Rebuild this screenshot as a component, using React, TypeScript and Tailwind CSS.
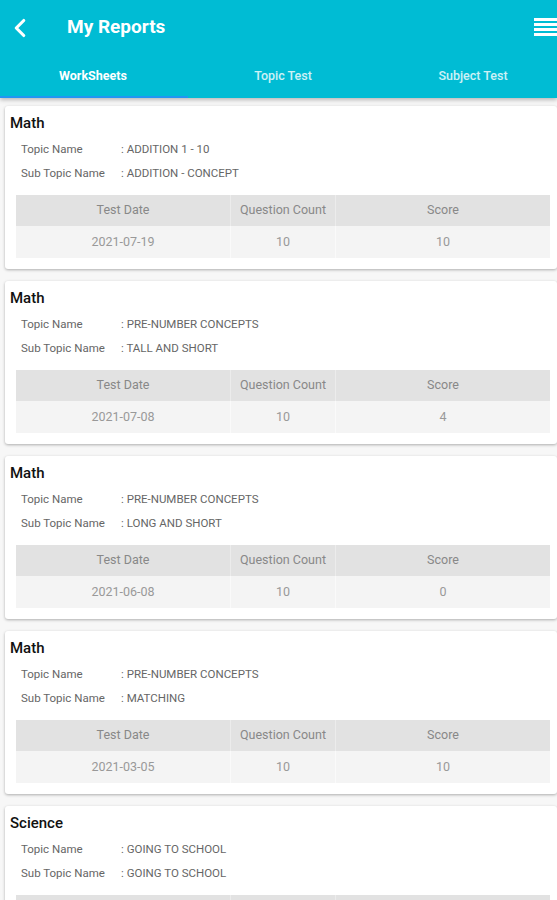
import { ChevronLeft } from 'lucide-react';

type Report = {
  subject: string;
  topic: string;
  subTopic: string;
  date: string;
  count: string;
  score: string;
};

const reports: Report[] = [
  { subject: 'Math', topic: 'ADDITION 1 - 10', subTopic: 'ADDITION - CONCEPT', date: '2021-07-19', count: '10', score: '10' },
  { subject: 'Math', topic: 'PRE-NUMBER CONCEPTS', subTopic: 'TALL AND SHORT', date: '2021-07-08', count: '10', score: '4' },
  { subject: 'Math', topic: 'PRE-NUMBER CONCEPTS', subTopic: 'LONG AND SHORT', date: '2021-06-08', count: '10', score: '0' },
  { subject: 'Math', topic: 'PRE-NUMBER CONCEPTS', subTopic: 'MATCHING', date: '2021-03-05', count: '10', score: '10' },
  { subject: 'Science', topic: 'GOING TO SCHOOL', subTopic: 'GOING TO SCHOOL', date: '2021-02-11', count: '10', score: '8' },
];

const tabs = ['WorkSheets', 'Topic Test', 'Subject Test'];

function ReportCard({ r }: { r: Report }) {
  return (
    <div className="ml-[5px] bg-white rounded-[3px] shadow-[0_1px_3px_rgba(0,0,0,0.3)] pt-[7px] pb-[11px] pl-[5px] pr-[7px]">
      <div className="text-[15px] font-medium text-[#111] leading-[20px]">{r.subject}</div>
      <div className="pl-[11px] mt-[4px] text-[11.5px] text-[#666] leading-[24px]">
        <div className="flex">
          <span className="w-[100px]">Topic Name</span>
          <span>: {r.topic}</span>
        </div>
        <div className="flex">
          <span className="w-[100px]">Sub Topic Name</span>
          <span>: {r.subTopic}</span>
        </div>
      </div>
      <div className="ml-[6px] mt-[10px] text-[12.5px] text-[#888]">
        <div className="flex bg-[#e2e2e2] h-[31px] items-center">
          <div className="w-[214px] text-center">Test Date</div>
          <div className="w-[106px] h-full flex items-center justify-center border-x border-[#ececec]">Question Count</div>
          <div className="flex-1 text-center">Score</div>
        </div>
        <div className="flex bg-[#f4f4f4] h-[32px] items-center text-[#999]">
          <div className="w-[214px] text-center">{r.date}</div>
          <div className="w-[106px] h-full flex items-center justify-center border-x border-[#fafafa]">{r.count}</div>
          <div className="flex-1 text-center">{r.score}</div>
        </div>
      </div>
    </div>
  );
}

export default function App() {
  return (
    <div className="w-[557px] h-[900px] overflow-hidden bg-[#f7f7f7] font-['Roboto',sans-serif]">
      <header className="bg-[#00bcd4] shadow-[0_2px_4px_rgba(0,0,0,0.25)] relative z-10 overflow-hidden">
        <div className="h-[55px] flex items-center">
          <ChevronLeft className="w-[30px] h-[30px] text-white ml-[5px]" strokeWidth={2.5} />
          <span className="ml-[32px] text-white text-[19px] font-bold">My Reports</span>
          <div className="ml-auto mr-[-3px] flex flex-col gap-[2px] mt-[-2px]">
            <span className="block w-[26px] h-[3px] bg-white" />
            <span className="block w-[26px] h-[3px] bg-white" />
            <span className="block w-[26px] h-[3px] bg-white" />
            <span className="block w-[26px] h-[3px] bg-white" />
          </div>
        </div>
        <div className="flex h-[43px] ml-[-2px]">
          {tabs.map((t, i) => (
            <div key={t} className="w-[190px] shrink-0 relative flex items-center justify-center">
              <span className={i === 0 ? 'text-white text-[12.5px] font-bold' : 'text-white/80 text-[12.5px] font-medium'}>{t}</span>
              {i === 0 && <span className="absolute bottom-0 left-0 right-0 h-[2px] bg-[#2196f3]" />}
            </div>
          ))}
        </div>
      </header>
      <div className="pt-[8px] flex flex-col gap-[12px]">
        {reports.map((r, i) => (
          <ReportCard key={i} r={r} />
        ))}
      </div>
    </div>
  );
}
